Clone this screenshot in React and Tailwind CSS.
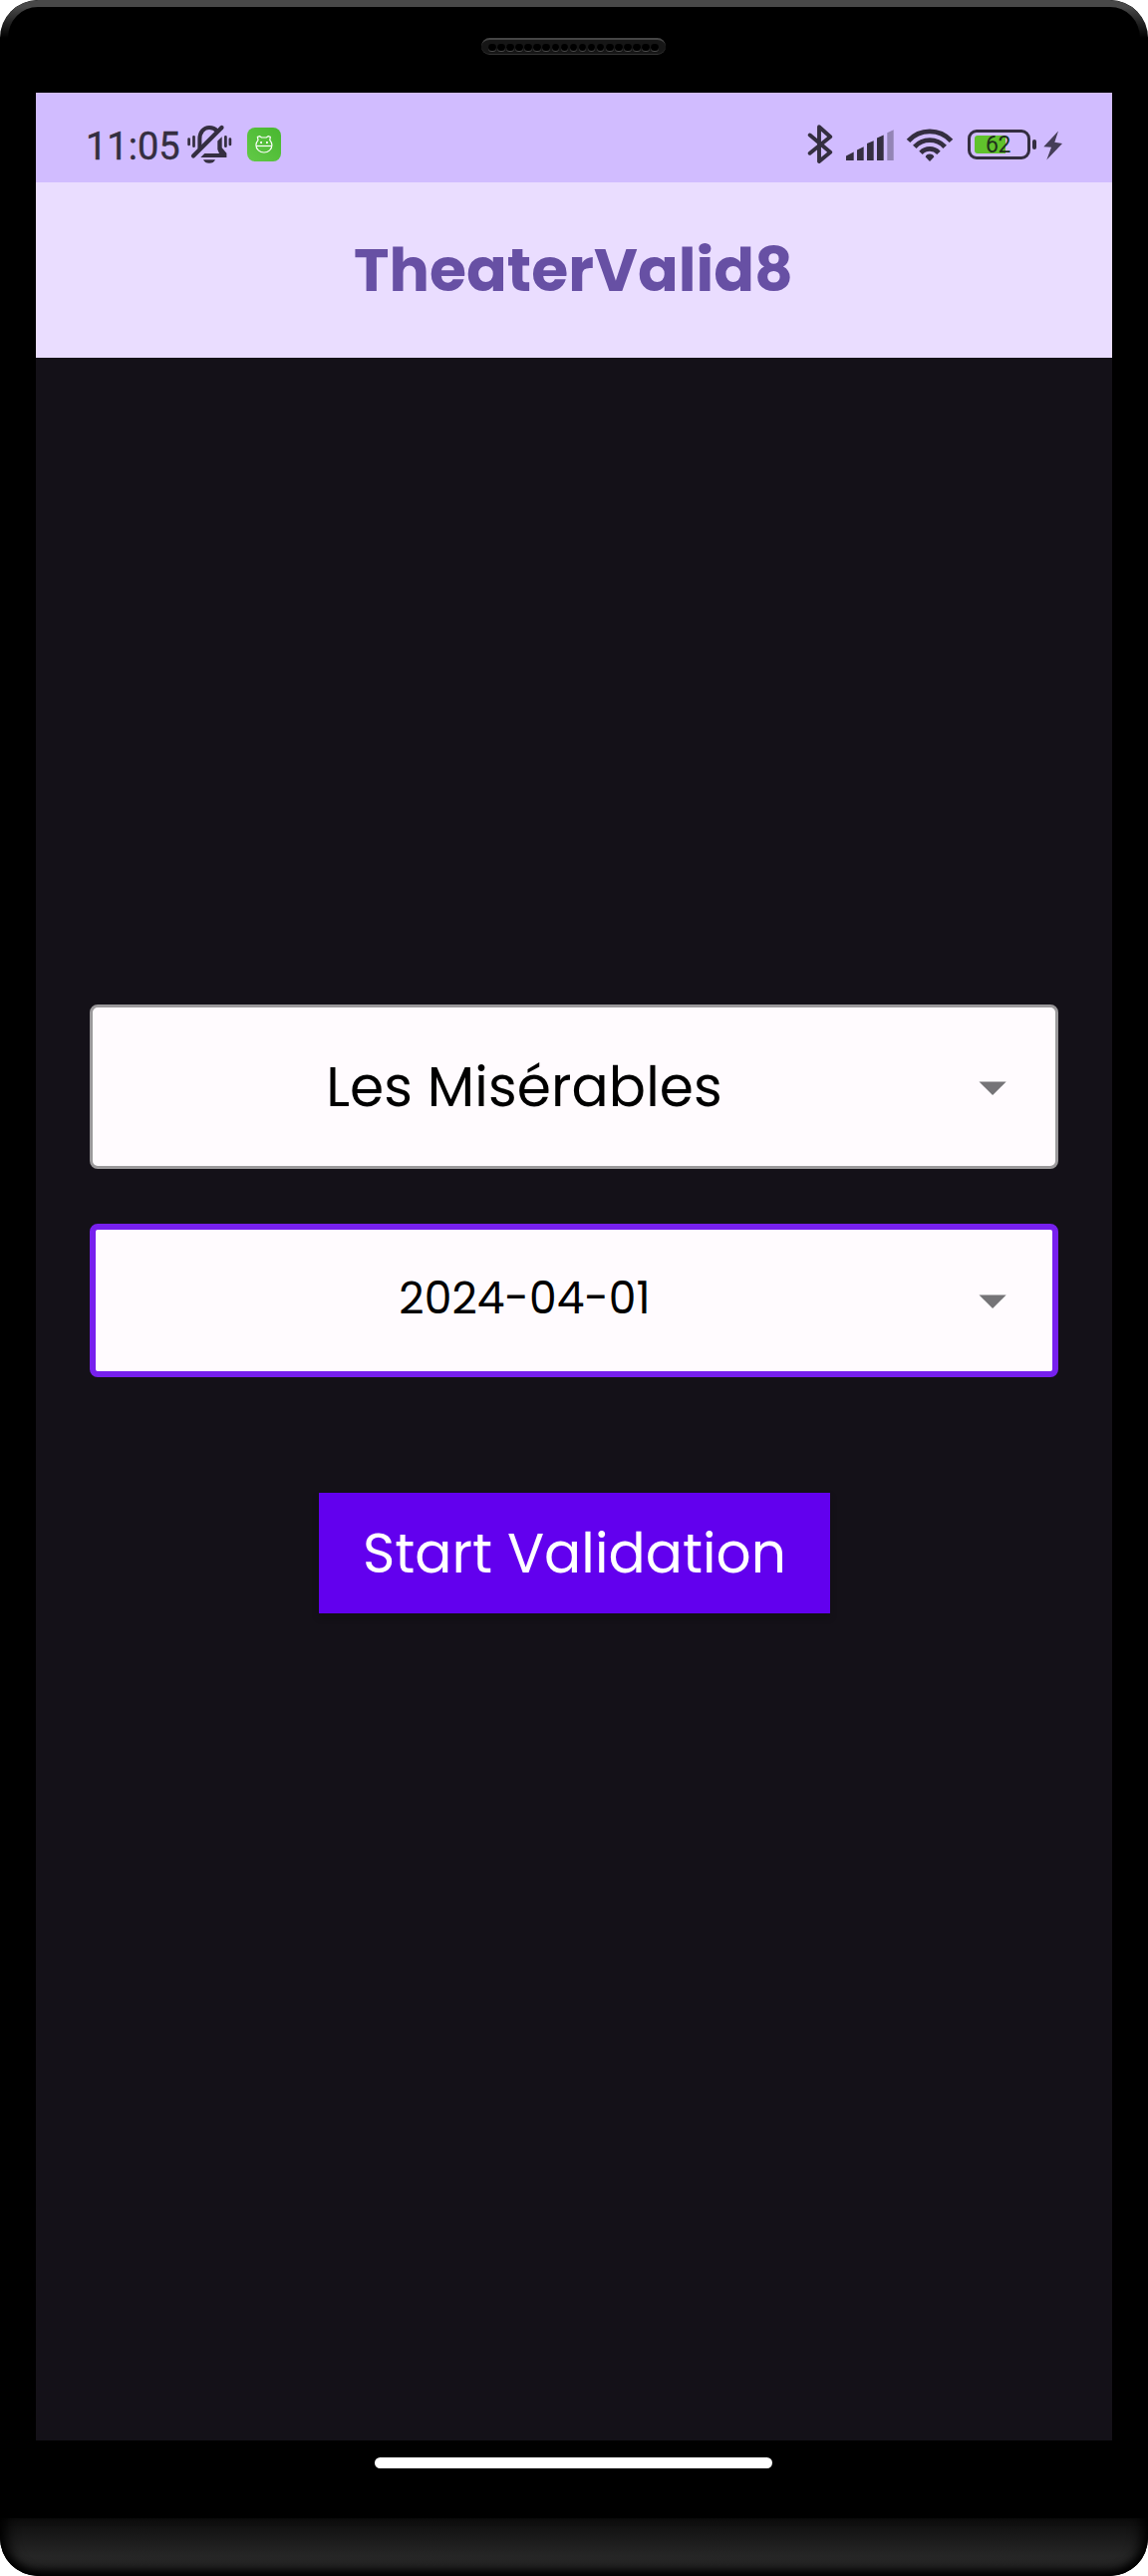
function BellOffIcon() {
  return (
    <svg className="block h-[40px] w-[46px]" viewBox="187 126 46 40" fill="none" stroke="#342e40">
      <path d="M189.600 140.500v5.500M194.500 138.300v9.400M226.400 138.300v9.400M230.900 140.500v5.500" strokeWidth="2.700" strokeLinecap="round" />
      <path d="M200.400 150V140.500C200.400 133.500 204.500 129 210 129C213.400 129 216 130.200 217.800 132.400" strokeWidth="4" />
      <path d="M194 157.500L222.500 129" strokeWidth="4.200" strokeLinecap="round" />
      <path d="M222.700 138.200V149.300L227.400 154.800V159H201.300L205.300 155H220L218.300 151V142.600Z" fill="#342e40" stroke="none" />
      <path d="M204 161.200H216C215 163.500 212.800 164.800 210 164.800S205 163.500 204 161.200Z" fill="#342e40" stroke="none" />
    </svg>
  );
}

function RobotIcon() {
  return (
    <svg className="block h-[20px] w-[20px]" viewBox="0 0 20 20" fill="none" stroke="#fff" strokeWidth="1.200">
      <path d="M4 5.600L3.400 2.400L5.600 1.700L7.400 3H12.300L14.200 1.700L16.300 2.400L15.800 5.600C17 7 17.900 8.700 17.900 10.400C17.900 15 14.300 18 10 18S1.900 15 1.900 10.400C1.900 8.700 2.800 7 4 5.600Z" />
      <path d="M2 11.500H18" />
      <path d="M6.200 8h1.800M12 8h1.800" strokeWidth="1.800" />
    </svg>
  );
}

function BluetoothIcon() {
  return (
    <svg className="block h-[40px] w-[26px]" viewBox="810 125 26 40" fill="none" stroke="#342e40" strokeWidth="3.900" strokeLinecap="round" strokeLinejoin="round">
      <path d="M812.700 135.500L833.200 152.700L822 162V127.300L833.200 137.200L812.700 153.700" />
    </svg>
  );
}

function SignalIcon() {
  return (
    <svg className="block h-[32px] w-[48px]" viewBox="849 130 48 32" fill="#342e40">
      <path d="M849 161V156.500L856.700 152.600V161ZM860 161V150.500L866.700 147.300V161ZM870 161V144L876.700 141.200V161ZM880 161V138.500L886.700 135.500V161Z" />
      <path d="M890.300 161V133.200L896.700 130.300V161Z" fill="#9384b5" />
    </svg>
  );
}

function WifiIcon() {
  return (
    <svg className="block h-[34px] w-[48px]" viewBox="909 129 48 34" fill="none" stroke="#342e40" strokeWidth="4.800">
      <path d="M911.500 141.400A29 29 0 0 1 954.500 141.400" />
      <path d="M917.800 147.300A20.500 20.500 0 0 1 948.200 147.300" />
      <path d="M924 153.300A12.500 12.500 0 0 1 942 153.300" />
      <path d="M928.700 157.600C929 155.600 930.800 154.600 933 154.600S937 155.600 937.300 157.600L933 162Z" fill="#342e40" stroke="none" />
    </svg>
  );
}

function Battery() {
  return (
    <div className="flex items-center gap-[2px]">
      <div className="relative flex h-[30px] w-[63px] items-center rounded-[9px] border-[3px] border-[#342e40] pl-[4px]">
        <div className="h-[18px] w-[31px] rounded-l-[3px] bg-[#60c22c]" />
        <span className="absolute top-0 left-[15px] font-[Roboto] text-[23px] leading-[26px] tracking-[-0.4px] text-[#20301c]">62</span>
      </div>
      <div className="h-[10px] w-[4px] rounded-[2px] bg-[#342e40]" />
    </div>
  );
}

function BoltIcon() {
  return (
    <svg className="block h-[30px] w-[20px]" viewBox="1047 130.500 20 30" fill="#453d58">
      <path d="M1062 131L1047.300 146.700L1055 147.300L1050.300 160L1066 143.500L1058.300 142.200Z" />
    </svg>
  );
}

function Caret() {
  return (
    <svg className="block h-[14px] w-[28px]" viewBox="0 0 28 14" fill="#757477">
      <path d="M0.500 0.500H27.700L14.100 14Z" />
    </svg>
  );
}

export default function App() {
  return (
    <div className="bg-white font-[Poppins,Inter,sans-serif] [font-feature-settings:'cv11']">
      <div className="relative flex h-[2585px] w-[1152px] flex-col overflow-hidden rounded-[38px] bg-black">
        {/* light edge along the top of the casing */}
        <div className="pointer-events-none absolute inset-x-0 top-0 h-[60px] rounded-t-[38px] border-x-[8px] border-t-[7px] border-[#484848] [mask-image:linear-gradient(to_bottom,black_7px,transparent_38px)]" />

        {/* earpiece */}
        <div className="flex h-[93px] shrink-0 pt-[38px] pl-[483px]">
          <div className="flex h-[17px] w-[185px] items-center justify-between rounded-full border-t-[2px] border-b border-t-[#454545] border-b-[#333] bg-[#161616] px-[7px] pt-[1px]">
            {Array.from({ length: 19 }, (_, i) => (
              <span key={i} className="h-[7.500px] w-[7.500px] rounded-full bg-black shadow-[0_1px_0_#4a4a4a]" />
            ))}
          </div>
        </div>

        <div className="mx-[36px] flex h-[2356px] shrink-0 flex-col bg-[#141118]">
          <div className="flex h-[90px] shrink-0 items-center justify-between bg-[#d1bcff] pr-[49px] pl-[50px]">
            <div className="flex items-center pt-[14px]">
              <span className="w-[101px] pt-[5px] font-[Roboto] text-[38px] leading-[37px] text-[#342e40] [-webkit-text-stroke:0.4px_#342e40]">11:05</span>
              <BellOffIcon />
              <div className="ml-[15px] flex h-[34px] w-[34px] items-center justify-center rounded-[8px] bg-linear-to-tr from-[#62c947] to-[#48b72f]">
                <RobotIcon />
              </div>
            </div>
            <div className="flex items-center pt-[14px]">
              <BluetoothIcon />
              <div className="ml-[13px] pt-[2px]"><SignalIcon /></div>
              <div className="ml-[12px] pt-[2px]"><WifiIcon /></div>
              <div className="ml-[14px]"><Battery /></div>
              <div className="ml-[7px] pt-px"><BoltIcon /></div>
            </div>
          </div>

          <header className="flex h-[176px] shrink-0 items-center justify-center bg-[#eaddff] pr-px">
            <h1 className="text-[60px] leading-[80px] font-bold tracking-[0.06px] text-[#6750a4]">TheaterValid8</h1>
          </header>

          <main className="flex flex-1 flex-col items-center px-[54px] pt-[649px]">
            <div className="flex h-[165px] w-full items-center rounded-[8px] border-[3px] border-[#9b999b] bg-[#fffbfe]">
              <div className="flex flex-1 justify-center pr-[4px]">
                <span className="text-[55px] leading-[80px] tracking-[0.1px] text-black">Les Misérables</span>
              </div>
              <div className="w-[96px] pt-[3px] pl-[19px]"><Caret /></div>
            </div>
            <div className="mt-[55px] flex h-[154px] w-full items-center rounded-[8px] border-[6px] border-[#7720ee] bg-[#fffbfe]">
              <div className="flex flex-1 justify-center pr-[6px] pb-[5px]">
                <span className="text-[44px] leading-[60px] tracking-[0.1px] text-black">2024-04-01</span>
              </div>
              <div className="w-[93px] pt-[2px] pl-[19px]"><Caret /></div>
            </div>
            <button className="mt-[116px] flex h-[121px] w-[513px] items-center justify-center bg-[#6200ee] pl-px shadow-[0_4px_6px_#10101066]">
              <span className="text-[55px] leading-[80px] tracking-[0.05px] text-white">Start Validation</span>
            </button>
          </main>
        </div>

        {/* gesture bar and chin */}
        <div className="flex h-[78px] shrink-0 pt-[17px] pl-[376px]">
          <div className="h-[11px] w-[399px] rounded-full bg-white" />
        </div>
        <div className="h-[58px] shrink-0 rounded-b-[38px] bg-linear-to-b from-[#0d0d0d] via-[#262626] via-65% to-[#222] shadow-[inset_0_-8px_8px_-2px_#000,inset_14px_0_14px_-8px_#000,inset_-14px_0_14px_-8px_#000]" />
      </div>
    </div>
  );
}
